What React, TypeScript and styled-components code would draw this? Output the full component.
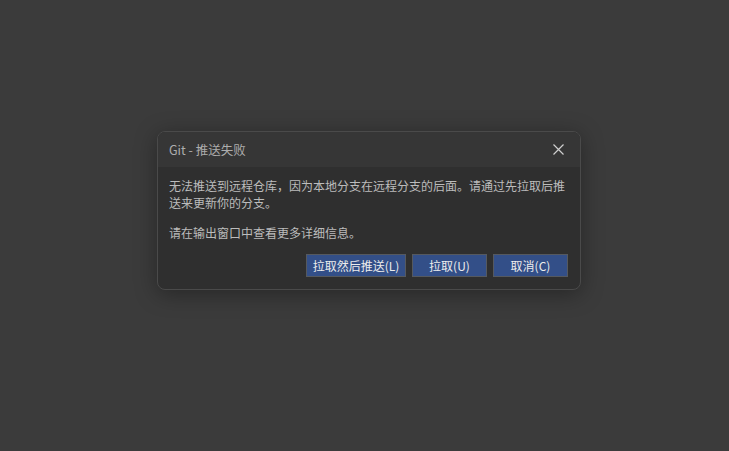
import React from "react";
import styled, { createGlobalStyle } from "styled-components";

const Global = createGlobalStyle`
  html, body { margin: 0; padding: 0; background: #3b3b3b; }
  body { width: 729px; height: 451px; overflow: hidden; font-family: "Noto Sans CJK SC", "Liberation Sans", sans-serif; }
`;

const Page = styled.div`
  display: flex;
  align-items: flex-start;
  padding: 131px 0 0 157px;
  box-sizing: border-box;
  width: 729px;
  height: 451px;
`;

const Dialog = styled.div`
  width: 424px;
  height: 159px;
  box-sizing: border-box;
  background: #2f2f2f;
  border: 1px solid #4a4a4a;
  border-radius: 8px;
  overflow: hidden;
  display: flex;
  flex-direction: column;
  box-shadow: 0 4px 22px rgba(0, 0, 0, 0.35);
`;

const Header = styled.div`
  height: 35px;
  flex: none;
  background: #363636;
  display: flex;
  align-items: center;
  justify-content: space-between;
  padding: 0 15px 0 11px;
`;

const Title = styled.span`
  font-size: 12.5px;
  color: #adadad;
  font-family: "Noto Sans CJK SC", "Noto Sans", sans-serif;
`;

const Close = styled.button`
  background: none;
  border: none;
  padding: 0;
  width: 14px;
  height: 14px;
  display: flex;
  align-items: center;
  justify-content: center;
  color: #d0d0d0;
`;

const Body = styled.div`
  flex: 1;
  padding: 10px 12px 12px 11px;
  display: flex;
  flex-direction: column;
`;

const Text = styled.p<{ $gap?: number }>`
  margin: 0 0 ${(p) => p.$gap ?? 0}px 0;
  font-size: 12px;
  line-height: 17px;
  color: #bcbcbc;
`;

const Actions = styled.div`
  margin-top: auto;
  display: flex;
  justify-content: flex-end;
  gap: 6px;
`;

const Btn = styled.button<{ $w: number }>`
  width: ${(p) => p.$w}px;
  height: 23px;
  box-sizing: border-box;
  background: #334f88;
  border: 1px solid #55595f;
  color: #ececec;
  font-size: 12px;
  font-family: "Noto Sans CJK SC", "Noto Sans", sans-serif;
  padding: 0;
  display: flex;
  align-items: center;
  justify-content: center;
`;

export default function App() {
  return (
    <>
      <Global />
      <Page>
        <Dialog>
          <Header>
            <Title>Git - 推送失败</Title>
            <Close aria-label="close">
              <svg width="11" height="11" viewBox="0 0 11 11">
                <path d="M0.5 0.5 L10.5 10.5 M10.5 0.5 L0.5 10.5" stroke="#cfcfcf" strokeWidth="1.2" />
              </svg>
            </Close>
          </Header>
          <Body>
            <Text $gap={13}>
              无法推送到远程仓库，因为本地分支在远程分支的后面。请通过先拉取后推送来更新你的分支。
            </Text>
            <Text>请在输出窗口中查看更多详细信息。</Text>
            <Actions>
              <Btn $w={100}>拉取然后推送(L)</Btn>
              <Btn $w={75}>拉取(U)</Btn>
              <Btn $w={75}>取消(C)</Btn>
            </Actions>
          </Body>
        </Dialog>
      </Page>
    </>
  );
}
